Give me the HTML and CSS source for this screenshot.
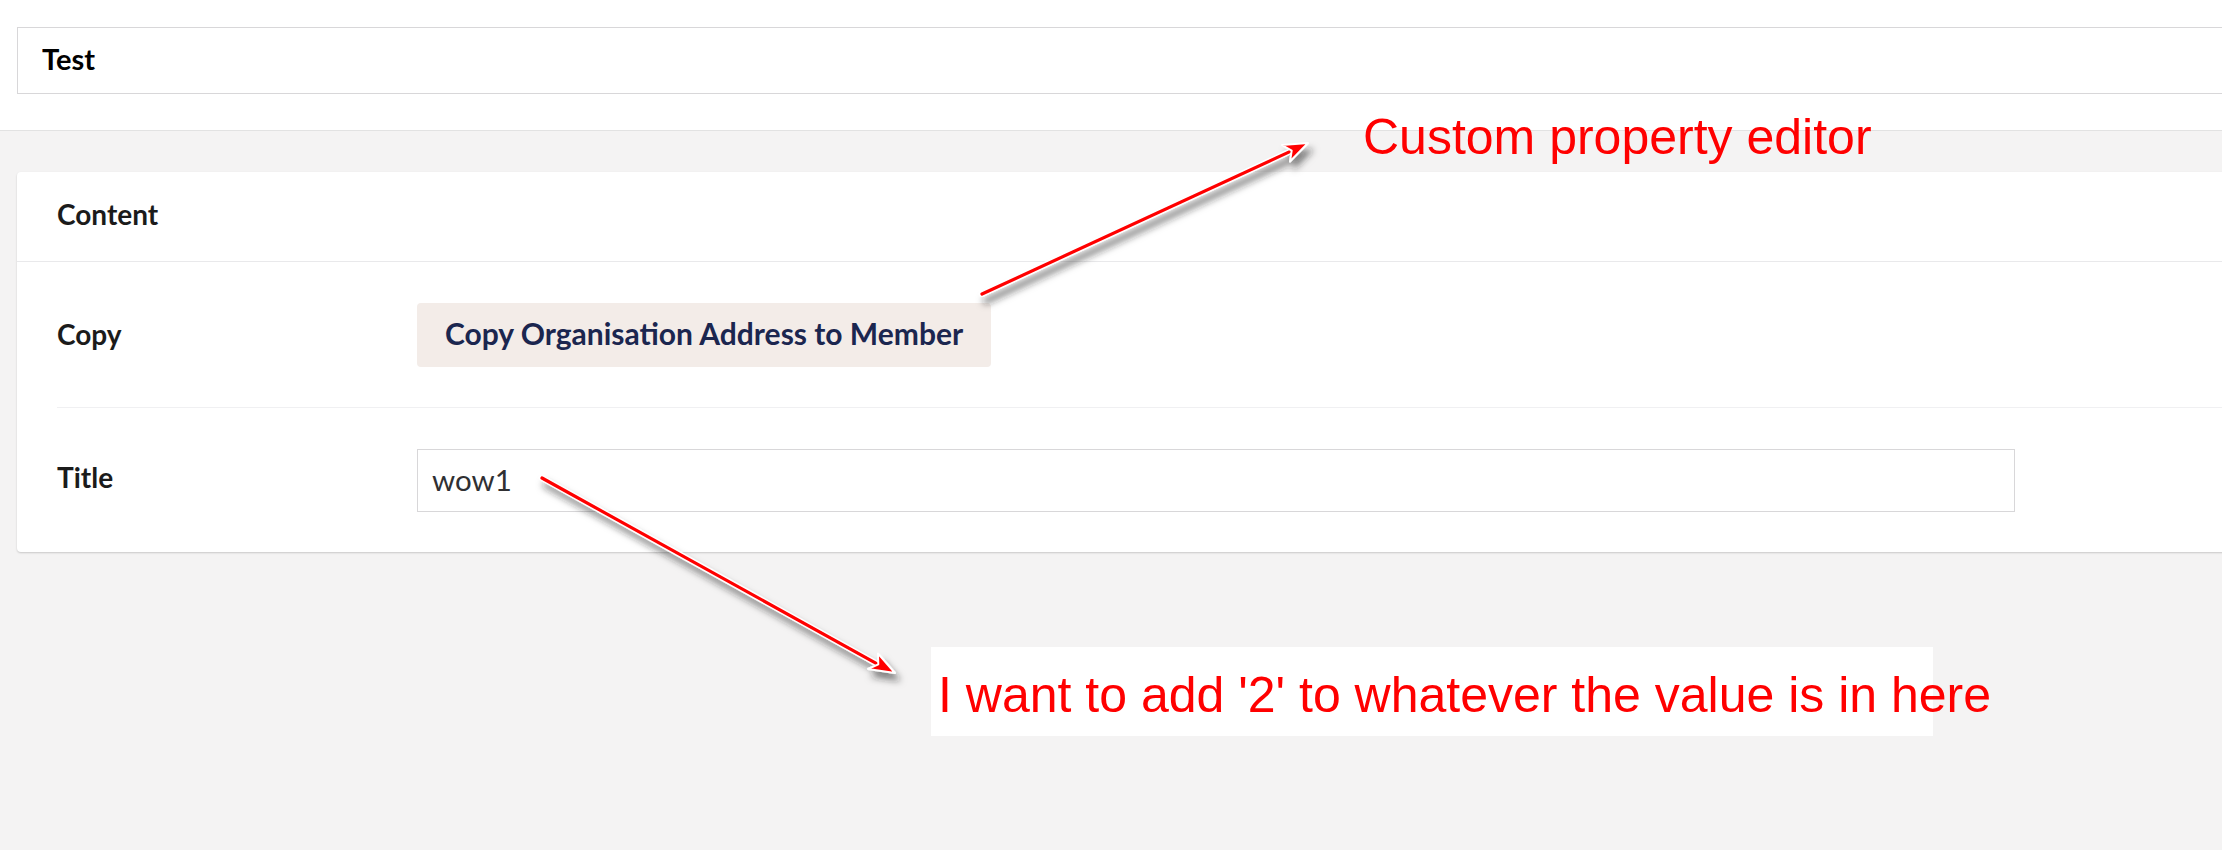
FILE: index.html
```html
<!DOCTYPE html>
<html lang="en">
<head>
    <meta charset="UTF-8">
    <title>Test - Content</title>
    <link rel="stylesheet" href="styles.css">
</head>
<body>
    <header class="editor-header">
        <input class="name-input" type="text" value="Test">
    </header>

    <main class="editor-main">
        <div class="card">
            <div class="card-title">Content</div>
            <div class="prop-row">
                <div class="prop-label">Copy</div>
                <div class="prop-control">
                    <button class="copy-btn">Copy Organisation Address to Member</button>
                </div>
            </div>
            <div class="prop-row">
                <div class="prop-label title-label">Title</div>
                <div class="prop-control">
                    <input class="text-input" type="text" value="wow1">
                </div>
            </div>
        </div>
    </main>

    <!-- annotations drawn over the screenshot -->
    <svg class="arrows" width="2222" height="850" viewBox="0 0 2222 850">
        <defs>
            <filter id="shadow" x="-20%" y="-20%" width="140%" height="140%">
                <feDropShadow dx="4" dy="7" stdDeviation="3.5" flood-color="#222" flood-opacity="0.55"/>
            </filter>
        </defs>
        <g filter="url(#shadow)">
            <line x1="982" y1="294" x2="1292" y2="150.6" stroke="#fff" stroke-width="6" stroke-linecap="round"/>
            <line x1="982" y1="294" x2="1292" y2="150.6" stroke="#f00" stroke-width="3.2" stroke-linecap="round"/>
            <polygon points="1308,143 1290,161.5 1291.7,150.6 1282,145" fill="#f00" stroke="#fff" stroke-width="2" stroke-linejoin="round"/>
        </g>
        <g filter="url(#shadow)">
            <line x1="542" y1="478" x2="878" y2="664.3" stroke="#fff" stroke-width="6" stroke-linecap="round"/>
            <line x1="542" y1="478" x2="878" y2="664.3" stroke="#f00" stroke-width="3.2" stroke-linecap="round"/>
            <polygon points="895,673 868,669 878.3,664.3 878,653.5" fill="#f00" stroke="#fff" stroke-width="2" stroke-linejoin="round"/>
        </g>
    </svg>
    <div class="note note-top">Custom property editor</div>
    <div class="note note-bottom">I want to add '2' to whatever the value is in here</div>
</body>
</html>
```

FILE: styles.css
```css
body {
    font-family: Lato, "Open Sans", sans-serif;
    margin: 0;
    padding: 0;
    background-color: #f4f3f3;
    overflow: hidden;
    height: 850px;
    position: relative;
}

.editor-header {
    background-color: #fff;
    border-bottom: 1px solid #e2e2e2;
    padding: 27px 0 36px 17px;
}

.name-input {
    display: block;
    box-sizing: border-box;
    width: calc(100% + 40px);
    height: 67px;
    padding: 0 24px 4px;
    border: 1px solid #d8d7d9;
    font-family: Lato, sans-serif;
    font-size: 29px;
    font-weight: bold;
    color: #000;
    outline: none;
}

.editor-main {
    padding: 41px 0 0 17px;
}

.card {
    background-color: #fff;
    border-radius: 4px;
    box-shadow: 0 1px 2px rgba(0, 0, 0, 0.18);
    margin-right: -40px;
}

.card-title {
    box-sizing: border-box;
    height: 90px;
    padding: 0 40px 5px;
    display: flex;
    align-items: center;
    border-bottom: 1px solid #e9e9eb;
    font-size: 28px;
    font-weight: bold;
    color: #1b1b1b;
}

.prop-row {
    display: flex;
    align-items: baseline;
    margin: 0 40px;
    padding: 41px 0 40px;
}

.prop-row + .prop-row {
    border-top: 1px solid #f0f0f2;
}

.prop-label {
    width: 360px;
    flex-shrink: 0;
    font-size: 28px;
    font-weight: bold;
    color: #1b1b1b;
}

.title-label {
    position: relative;
    top: -3px;
}

.copy-btn {
    height: 64px;
    padding: 0 28px 5px;
    border: none;
    border-radius: 4px;
    background-color: #f3ece8;
    color: #1b264f;
    font-family: Lato, sans-serif;
    font-size: 30px;
    font-weight: bold;
    cursor: pointer;
}

.text-input {
    box-sizing: border-box;
    width: 1598px;
    height: 63px;
    padding: 0 14px 2px;
    border: 1px solid #d8d7d9;
    font-family: Lato, sans-serif;
    font-size: 29.5px;
    color: #303033;
    outline: none;
}

.arrows {
    position: absolute;
    top: 0;
    left: 0;
    pointer-events: none;
}

.note {
    position: absolute;
    font-family: "Liberation Sans", Arial, sans-serif;
    font-size: 50px;
    line-height: 1;
    color: #f00;
    white-space: nowrap;
}

.note-top {
    left: 1363px;
    top: 112px;
}

.note-bottom {
    left: 931px;
    top: 647px;
    width: 1002px;
    height: 89px;
    box-sizing: border-box;
    padding: 23px 0 0 7px;
    background-color: #fff;
}
```
